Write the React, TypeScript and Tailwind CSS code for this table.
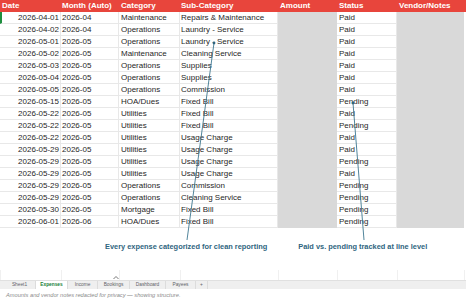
import React from 'react';

type Row = {
    date: string;
    month: string;
    category: string;
    sub: string;
    status: string;
};

const rows: Row[] = [
    {date: '2026-04-01', month: '2026-04', category: 'Maintenance', sub: 'Repairs & Maintenance', status: 'Paid'},
    {date: '2026-04-02', month: '2026-04', category: 'Operations', sub: 'Laundry - Service', status: 'Paid'},
    {date: '2026-05-01', month: '2026-05', category: 'Operations', sub: 'Laundry - Service', status: 'Paid'},
    {date: '2026-05-02', month: '2026-05', category: 'Maintenance', sub: 'Cleaning Service', status: 'Paid'},
    {date: '2026-05-03', month: '2026-05', category: 'Operations', sub: 'Supplies', status: 'Paid'},
    {date: '2026-05-04', month: '2026-05', category: 'Operations', sub: 'Supplies', status: 'Paid'},
    {date: '2026-05-05', month: '2026-05', category: 'Operations', sub: 'Commission', status: 'Paid'},
    {date: '2026-05-15', month: '2026-05', category: 'HOA/Dues', sub: 'Fixed Bill', status: 'Pending'},
    {date: '2026-05-22', month: '2026-05', category: 'Utilities', sub: 'Fixed Bill', status: 'Paid'},
    {date: '2026-05-22', month: '2026-05', category: 'Utilities', sub: 'Fixed Bill', status: 'Pending'},
    {date: '2026-05-22', month: '2026-05', category: 'Utilities', sub: 'Usage Charge', status: 'Paid'},
    {date: '2026-05-29', month: '2026-05', category: 'Utilities', sub: 'Usage Charge', status: 'Paid'},
    {date: '2026-05-29', month: '2026-05', category: 'Utilities', sub: 'Usage Charge', status: 'Pending'},
    {date: '2026-05-29', month: '2026-05', category: 'Utilities', sub: 'Usage Charge', status: 'Paid'},
    {date: '2026-05-29', month: '2026-05', category: 'Operations', sub: 'Commission', status: 'Pending'},
    {date: '2026-05-29', month: '2026-05', category: 'Operations', sub: 'Cleaning Service', status: 'Pending'},
    {date: '2026-05-30', month: '2026-05', category: 'Mortgage', sub: 'Fixed Bill', status: 'Pending'},
    {date: '2026-06-01', month: '2026-06', category: 'HOA/Dues', sub: 'Fixed Bill', status: 'Pending'},
];

const tabs = [
    {name: 'Sheet1', w: 'w-[32px]'},
    {name: 'Expenses', w: 'w-[32px]', active: true},
    {name: 'Income', w: 'w-[30px]'},
    {name: 'Bookings', w: 'w-[32px]'},
    {name: 'Dashboard', w: 'w-[36px]'},
    {name: 'Payees', w: 'w-[30px]'},
    {name: '+', w: 'w-[12px]'},
];

const grid = 'grid grid-cols-[61px_58px_61px_98px_59px_60px_67px_2px]';
const cell = 'h-[12px] leading-[12px] border-b border-r border-[#e8e8e8] whitespace-nowrap overflow-hidden';

export default function App() {
    return (
        <div className="relative w-[466px] h-[300px] overflow-hidden bg-white font-['Liberation_Sans',Arial,sans-serif] text-[#1f1f1f]">
            {/* header */}
            <div className={`${grid} h-[12px] bg-[#e8453c] text-white font-bold text-[8px] leading-[12px]`}>
                <div className="pl-[2px]">Date</div>
                <div className="pl-[1px]">Month (Auto)</div>
                <div className="pl-[2px]">Category</div>
                <div className="pl-[1px]">Sub-Category</div>
                <div className="pl-[2px]">Amount</div>
                <div className="pl-[2px]">Status</div>
                <div className="pl-[2px]">Vendor/Notes</div>
                <div/>
            </div>

            {/* rows */}
            {rows.map((r, i) => (
                <div key={i} className={`${grid} text-[8px]`}>
                    <div className={`${cell} text-right pr-[1px] ${i === 0 ? 'border-l-2 border-l-[#1e8e3e]' : ''}`}>{r.date}</div>
                    <div className={`${cell} pl-[1px]`}>{r.month}</div>
                    <div className={`${cell} pl-[2px]`}>{r.category}</div>
                    <div className={`${cell} pl-[1px]`}>{r.sub}</div>
                    <div className="h-[12px] bg-[#d9d9d9]"/>
                    <div className={`${cell} pl-[2px]`}>{r.status}</div>
                    <div className="h-[12px] bg-[#d9d9d9]"/>
                    <div/>
                </div>
            ))}

            {/* annotations */}
            <div className="h-[52px] flex flex-col">
                <div className="flex pt-[14px] text-[7.4px] leading-[10px] font-bold text-[#2f6580]">
                    <span className="ml-[105px]">Every expense categorized for clean reporting</span>
                    <span className="ml-[31px]">Paid vs. pending tracked at line level</span>
                </div>
                <div className={`${grid} mt-auto h-[10px]`}>
                    {[0, 1, 2, 3, 4, 5, 6].map(k => (
                        <div key={k} className="border-l border-[#f0f0f0]"/>
                    ))}
                    <div className="border-l border-[#f0f0f0]"/>
                </div>
            </div>

            {/* sheet tabs */}
            <div className="flex h-[9px] bg-[#efefef] border-t border-[#e0e0e0] pl-[4px] text-[4.8px] leading-[8px]">
                {tabs.map(t => (
                    <div
                        key={t.name}
                        className={`${t.w} text-center border-r border-[#dcdcdc] ${t.active ? 'bg-white text-[#188038] font-bold' : 'text-[#5f6368]'}`}
                    >
                        {t.name}
                    </div>
                ))}
            </div>

            {/* caption */}
            <div className="pl-[6px] pt-[2px] text-[5.7px] leading-[8px] italic text-[#8a8a8a]">
                Amounts and vendor notes redacted for privacy — showing structure.
            </div>

            {/* callout lines */}
            <svg className="absolute inset-0 pointer-events-none" width="466" height="300" viewBox="0 0 466 300">
                <line x1="214" y1="43" x2="187" y2="240" stroke="#3d7790" strokeWidth="0.9"/>
                <circle cx="214" cy="43" r="1.4" fill="#2f6580"/>
                <line x1="353" y1="103" x2="364" y2="240" stroke="#3d7790" strokeWidth="0.9"/>
                <circle cx="353" cy="103" r="1.4" fill="#2f6580"/>
                <polyline points="113.5,279 116,276.5 118.5,279" fill="none" stroke="#555" strokeWidth="0.8"/>
            </svg>
        </div>
    );
}
